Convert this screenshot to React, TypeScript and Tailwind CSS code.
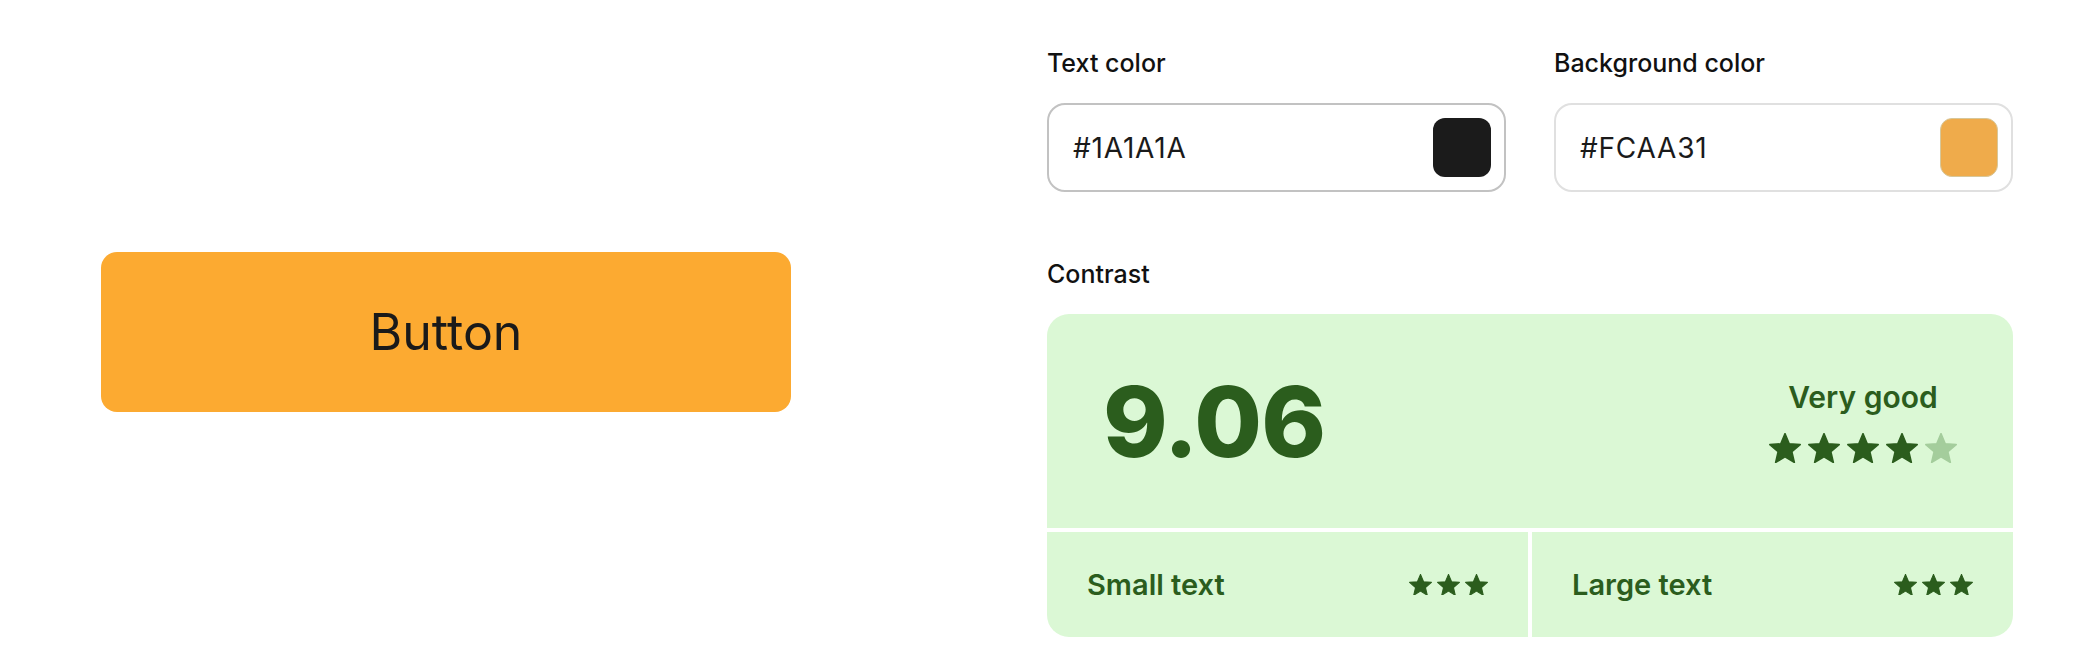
import type { ReactNode } from "react";

const GREEN = "#2b5d1d";

function Star({ size, light }: { size: number; light?: boolean }) {
  const color = light ? "#a4cd9c" : GREEN;
  return (
    <svg
      width={size}
      height={size * 0.95}
      viewBox="1.5 1.6 21 20"
      fill={color}
      stroke={color}
      strokeWidth={1}
      strokeLinejoin="round"
    >
      <path d="M12 17.27L18.18 21l-1.64-7.03L22 9.24l-7.19-.61L12 2 9.19 8.63 2 9.24l5.46 4.73L5.82 21z" />
    </svg>
  );
}

function Label({ children }: { children: ReactNode }) {
  return <div className="text-[25px] leading-[32px] font-medium text-[#111111]">{children}</div>;
}

function ColorField({ label, value, swatch, border }: { label: string; value: string; swatch: string; border: string }) {
  return (
    <div className="flex flex-col gap-6">
      <Label>{label}</Label>
      <div className={`flex items-center justify-between h-[89px] rounded-[18px] border-2 pl-6 pr-[13px] ${border}`}>
        <span className="text-[28px] tracking-[0.8px] text-[#1a1a1a]">{value}</span>
        <span className={`w-[58px] h-[59px] rounded-[12px] ${swatch}`} />
      </div>
    </div>
  );
}

export default function App() {
  return (
    <div className="h-[658px] w-[2089px] bg-white flex font-['Inter',sans-serif]">
      {/* preview */}
      <div className="pl-[101px] flex items-center pt-[6px]">
        <button className="w-[690px] h-[160px] rounded-[16px] bg-[#fcaa31] text-[50px] text-[#1a1a1a]">
          Button
        </button>
      </div>

      {/* controls */}
      <div className="ml-[256px] w-[966px] pt-[47px] flex flex-col">
        <div className="grid grid-cols-2 gap-12">
          <ColorField label="Text color" value="#1A1A1A" swatch="bg-[#1b1b1b]" border="border-[#c2c2c2]" />
          <ColorField label="Background color" value="#FCAA31" swatch="bg-[#efab4b] border border-[#d7c79a]" border="border-[#e0e0e0]" />
        </div>

        <div className="mt-[66px]">
          <Label>Contrast</Label>
        </div>

        <div className="mt-6 rounded-[22px] overflow-hidden flex flex-col gap-[4px]">
          <div className="h-[214px] bg-[#dbf8d5] flex items-center justify-between pl-14 pr-[56px]">
            <span className="text-[98px] font-extrabold tracking-[-1px]" style={{ color: GREEN }}>
              9.06
            </span>
            <div className="flex flex-col items-center">
              <span className="text-[30px] leading-[36px] font-semibold" style={{ color: GREEN }}>
                Very good
              </span>
              <div className="mt-[18px] flex gap-[7px]">
                <Star size={32} />
                <Star size={32} />
                <Star size={32} />
                <Star size={32} />
                <Star size={32} light />
              </div>
            </div>
          </div>
          <div className="grid grid-cols-2 gap-[4px]">
            {["Small text", "Large text"].map((t) => (
              <div key={t} className="h-[105px] bg-[#dbf8d5] flex items-center justify-between px-10">
                <span className="text-[29px] font-semibold" style={{ color: GREEN }}>
                  {t}
                </span>
                <div className="flex gap-[5px]">
                  <Star size={23} />
                  <Star size={23} />
                  <Star size={23} />
                </div>
              </div>
            ))}
          </div>
        </div>
      </div>
    </div>
  );
}
